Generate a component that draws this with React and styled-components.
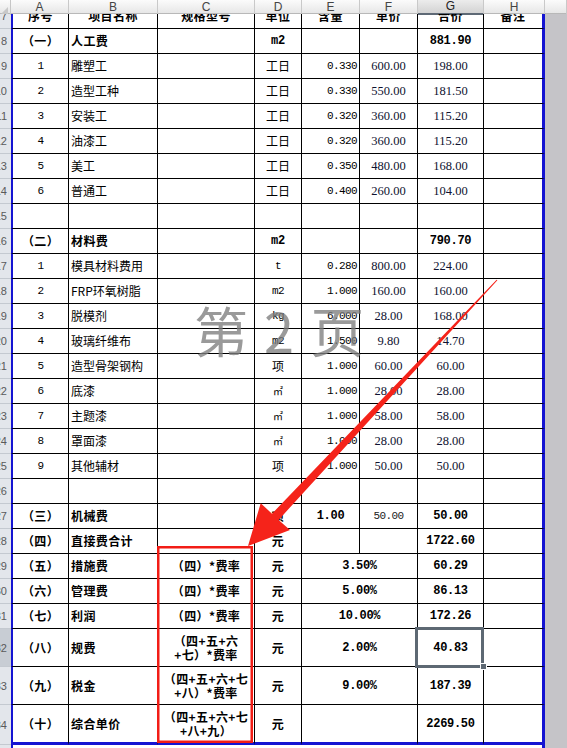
import styled, { createGlobalStyle, css } from "styled-components";

const COLS = "11px 58px 89px 97px 47px 58px 58px 66px 61px 1fr";
const BLUE = "#1414d2";

const GlobalStyle = createGlobalStyle`
  *, *::before, *::after { box-sizing: border-box; }
  html, body { margin: 0; padding: 0; background: #fff; overflow: hidden; }
  body { font-family: "Noto Sans CJK SC", "Liberation Sans", sans-serif; }
`;

const Window = styled.div`
  position: relative;
  width: 567px;
  height: 748px;
  overflow: hidden;
  display: flex;
  flex-direction: column;
  background: #fff;
`;

const ColBar = styled.div`
  flex: none;
  display: grid;
  grid-template-columns: ${COLS};
  height: 14px;
  background: linear-gradient(#fbfbfb, #e7e7e7);
  border-bottom: 1px solid #b8b8b8;
`;

const Corner = styled.div`
  position: relative;
  border-right: 1px solid #c6c6c6;
  &::after {
    content: "";
    position: absolute;
    right: 2px;
    bottom: 1px;
    border-left: 7px solid transparent;
    border-bottom: 7px solid #c8c8c8;
  }
`;

const ColHead = styled.div`
  display: flex;
  align-items: center;
  justify-content: center;
  border-right: 1px solid #c9c9c9;
  font: 12px/13px "Liberation Sans", sans-serif;
  color: #444;
  ${(p) =>
    p.$active &&
    css`
      background: linear-gradient(#ececec, #d3d3d3);
      border-bottom: 2px solid #5e6975;
      color: #222;
    `}
`;

const Viewport = styled.div`
  flex: 1;
  overflow: hidden;
`;

const Rows = styled.div`
  margin-top: -10px;
`;

const Row = styled.div`
  display: grid;
  grid-template-columns: ${COLS};
  height: ${(p) => p.$h || 25}px;
`;

const RowHead = styled.div`
  display: flex;
  align-items: center;
  justify-content: flex-end;
  padding-right: 4px;
  overflow: hidden;
  white-space: nowrap;
  background: ${(p) => (p.$active ? "#c8cdd4" : "#e3e6eb")};
  border-bottom: 1px solid #c4c9d0;
  font: 11px "Liberation Sans", sans-serif;
  color: #5a5a5a;
`;

const Cell = styled.div`
  position: relative;
  grid-column: span ${(p) => p.$span || 1};
  display: flex;
  flex-direction: column;
  justify-content: center;
  align-items: ${(p) =>
    ({ l: "flex-start", c: "center", r: "flex-end" })[p.$align || "c"]};
  padding: 0 2px;
  white-space: nowrap;
  text-align: center;
  border-left: ${(p) => (p.$first ? `2px solid ${BLUE}` : "none")};
  border-right: ${(p) => (p.$edge ? `3px solid ${BLUE}` : "1px solid #000")};
  border-bottom: ${(p) => (p.$last ? `3px solid ${BLUE}` : "1px solid #000")};
  ${(p) =>
    p.$selected &&
    css`
      z-index: 2;
      &::after {
        content: "";
        position: absolute;
        left: -3px;
        top: -2px;
        right: -1px;
        bottom: -2px;
        border: 3px solid #5d6873;
      }
      &::before {
        content: "";
        position: absolute;
        right: -4px;
        bottom: -4px;
        width: 7px;
        height: 7px;
        background: #5d6873;
        border: 1px solid #fff;
        z-index: 1;
      }
    `}
`;

const TitleCell = styled(Cell)`
  justify-content: flex-start;
  padding-top: 3px;
  border-bottom: none;
`;

const Outside = styled.div`
  background: #c5c4c8;
`;

const Cjk = styled.span`
  font-family: "Noto Sans CJK SC", sans-serif;
  font-size: ${(p) => p.$size || 12}px;
  font-weight: ${(p) => (p.$bold ? 700 : 400)};
  letter-spacing: ${(p) => (p.$bold ? "0.4px" : "0")};
  line-height: ${(p) => (p.$size > 14 ? "20px" : "14px")};
  color: #000;
`;

const Mono = styled.span`
  font-family: "Liberation Mono", monospace;
  font-size: ${(p) => (p.$bold ? "12px" : "11px")};
  font-weight: ${(p) => (p.$bold ? 700 : 400)};
  letter-spacing: ${(p) => (p.$bold ? "-0.3px" : "-0.6px")};
  line-height: 14px;
  color: ${(p) => (p.$soft ? "#222" : "#000")};
`;

const Serif = styled.span`
  font-family: "Liberation Serif", serif;
  font-size: 12.5px;
  line-height: 14px;
  color: #0e1230;
`;

const Watermark = styled.div`
  position: absolute;
  left: 194px;
  top: 303px;
  font: 400 54px/1 "Noto Sans CJK SC", sans-serif;
  letter-spacing: 2px;
  white-space: pre;
  color: rgba(125, 125, 125, 0.78);
  pointer-events: none;
`;

const Marks = styled.svg`
  position: absolute;
  left: 0;
  top: 0;
  z-index: 5;
  pointer-events: none;
`;

const rows = [
  { n: 7, kind: "head" },
  { n: 8, kind: "section", a: "（一）", b: "人工费", d: "m2", g: "881.90" },
  { n: 9, kind: "item", a: "1", b: "雕塑工", d: "工日", e: "0.330", f: "600.00", g: "198.00" },
  { n: 10, kind: "item", a: "2", b: "造型工种", d: "工日", e: "0.330", f: "550.00", g: "181.50" },
  { n: 11, kind: "item", a: "3", b: "安装工", d: "工日", e: "0.320", f: "360.00", g: "115.20" },
  { n: 12, kind: "item", a: "4", b: "油漆工", d: "工日", e: "0.320", f: "360.00", g: "115.20" },
  { n: 13, kind: "item", a: "5", b: "美工", d: "工日", e: "0.350", f: "480.00", g: "168.00" },
  { n: 14, kind: "item", a: "6", b: "普通工", d: "工日", e: "0.400", f: "260.00", g: "104.00" },
  { n: 15, kind: "blank" },
  { n: 16, kind: "section", a: "（二）", b: "材料费", d: "m2", g: "790.70" },
  { n: 17, kind: "item", a: "1", b: "模具材料费用", d: "t", dm: true, e: "0.280", f: "800.00", g: "224.00" },
  { n: 18, kind: "item", a: "2", b: "FRP环氧树脂", d: "m2", dm: true, e: "1.000", f: "160.00", g: "160.00" },
  { n: 19, kind: "item", a: "3", b: "脱模剂", d: "kg", dm: true, e: "6.000", f: "28.00", g: "168.00" },
  { n: 20, kind: "item", a: "4", b: "玻璃纤维布", d: "m2", dm: true, e: "1.500", f: "9.80", g: "14.70" },
  { n: 21, kind: "item", a: "5", b: "造型骨架钢构", d: "项", e: "1.000", f: "60.00", g: "60.00" },
  { n: 22, kind: "item", a: "6", b: "底漆", d: "㎡", e: "1.000", f: "28.00", g: "28.00" },
  { n: 23, kind: "item", a: "7", b: "主题漆", d: "㎡", e: "1.000", f: "58.00", g: "58.00" },
  { n: 24, kind: "item", a: "8", b: "罩面漆", d: "㎡", e: "1.000", f: "28.00", g: "28.00" },
  { n: 25, kind: "item", a: "9", b: "其他辅材", d: "项", e: "1.000", f: "50.00", g: "50.00" },
  { n: 26, kind: "blank" },
  { n: 27, kind: "fee", a: "（三）", b: "机械费", d: "项", e: "1.00", f: "50.00", g: "50.00" },
  { n: 28, kind: "fee", a: "（四）", b: "直接费合计", d: "元", e: "", f: "", g: "1722.60" },
  { n: 29, kind: "fee", a: "（五）", b: "措施费", c: ["（四）*费率"], d: "元", ef: "3.50%", g: "60.29" },
  { n: 30, kind: "fee", a: "（六）", b: "管理费", c: ["（四）*费率"], d: "元", ef: "5.00%", g: "86.13" },
  { n: 31, kind: "fee", a: "（七）", b: "利润", c: ["（四）*费率"], d: "元", ef: "10.00%", g: "172.26" },
  { n: 32, h: 38, kind: "fee", a: "（八）", b: "规费", c: ["（四+五+六", "+七）*费率"], d: "元", ef: "2.00%", g: "40.83", selected: true },
  { n: 33, h: 38, kind: "fee", a: "（九）", b: "税金", c: ["（四+五+六+七", "+八）*费率"], d: "元", ef: "9.00%", g: "187.39" },
  { n: 34, h: 40, kind: "fee", a: "（十）", b: "综合单价", c: ["（四+五+六+七", "+八+九）"], d: "元", ef: "", g: "2269.50", last: true },
];

const heads = ["序号", "项目名称", "规格型号", "单位", "含量", "单价", "合价", "备注"];

function HeadRow() {
  return heads.map((t, i) => (
    <Cell key={t} $first={i === 0} $edge={i === 7}>
      <Cjk $bold>{t}</Cjk>
    </Cell>
  ));
}

function SectionRow({ r }) {
  return (
    <>
      <Cell $first><Cjk $bold>{r.a}</Cjk></Cell>
      <Cell $align="l"><Cjk $bold>{r.b}</Cjk></Cell>
      <Cell />
      <Cell><Mono $bold>{r.d}</Mono></Cell>
      <Cell />
      <Cell />
      <Cell><Mono $bold>{r.g}</Mono></Cell>
      <Cell $edge />
    </>
  );
}

function ItemRow({ r }) {
  return (
    <>
      <Cell $first><Mono>{r.a}</Mono></Cell>
      <Cell $align="l"><Cjk>{r.b}</Cjk></Cell>
      <Cell />
      <Cell>{r.dm ? <Mono>{r.d}</Mono> : <Cjk $size={r.d === "㎡" ? 10 : 12}>{r.d}</Cjk>}</Cell>
      <Cell $align="r"><Mono>{r.e}</Mono></Cell>
      <Cell><Serif>{r.f}</Serif></Cell>
      <Cell><Serif>{r.g}</Serif></Cell>
      <Cell $edge />
    </>
  );
}

function BlankRow() {
  return (
    <>
      <Cell $first />
      <Cell />
      <Cell />
      <Cell />
      <Cell />
      <Cell />
      <Cell />
      <Cell $edge />
    </>
  );
}

function FeeRow({ r }) {
  const last = r.last;
  return (
    <>
      <Cell $first $last={last}><Cjk $bold>{r.a}</Cjk></Cell>
      <Cell $align="l" $last={last}><Cjk $bold>{r.b}</Cjk></Cell>
      <Cell $last={last}>
        {(r.c || []).map((line) => (
          <Cjk $bold key={line}>{line}</Cjk>
        ))}
      </Cell>
      <Cell $last={last}><Cjk $bold>{r.d}</Cjk></Cell>
      {r.ef !== undefined ? (
        <Cell $span={2} $last={last}><Mono $bold>{r.ef}</Mono></Cell>
      ) : (
        <>
          <Cell><Mono $bold>{r.e}</Mono></Cell>
          <Cell><Mono $soft>{r.f}</Mono></Cell>
        </>
      )}
      <Cell $last={last} $selected={r.selected}><Mono $bold>{r.g}</Mono></Cell>
      <Cell $edge $last={last} />
    </>
  );
}

const bodies = { head: HeadRow, section: SectionRow, item: ItemRow, blank: BlankRow, fee: FeeRow };

export default function App() {
  return (
    <Window>
      <GlobalStyle />
      <ColBar>
        <Corner />
        {["A", "B", "C", "D", "E", "F", "G", "H"].map((c) => (
          <ColHead key={c} $active={c === "G"}>{c}</ColHead>
        ))}
        <ColHead />
      </ColBar>
      <Viewport>
        <Rows>
          {rows.map((r) => {
            const Body = bodies[r.kind];
            return (
              <Row key={r.n} $h={r.h}>
                <RowHead $active={r.selected}>{r.n}</RowHead>
                <Body r={r} />
                <Outside />
              </Row>
            );
          })}
          <Row $h={30}>
            <RowHead>35</RowHead>
            <TitleCell $span={8} $first $edge>
              <Cjk $bold $size={20}>综合单价分析表</Cjk>
            </TitleCell>
            <Outside />
          </Row>
        </Rows>
      </Viewport>
      <Watermark>第 2 页</Watermark>
      <Marks width="567" height="748" viewBox="0 0 567 748">
        <rect x="158.25" y="547.25" width="93.5" height="194.5" fill="none" stroke="#f21d16" strokeWidth="2.5" />
        <polygon
          fill="#f5231a"
          points="497.4,280.3 278.6,519.9 290,530 248,546 260.7,503.2 272,513.7 496.6,279.7"
        />
      </Marks>
    </Window>
  );
}
